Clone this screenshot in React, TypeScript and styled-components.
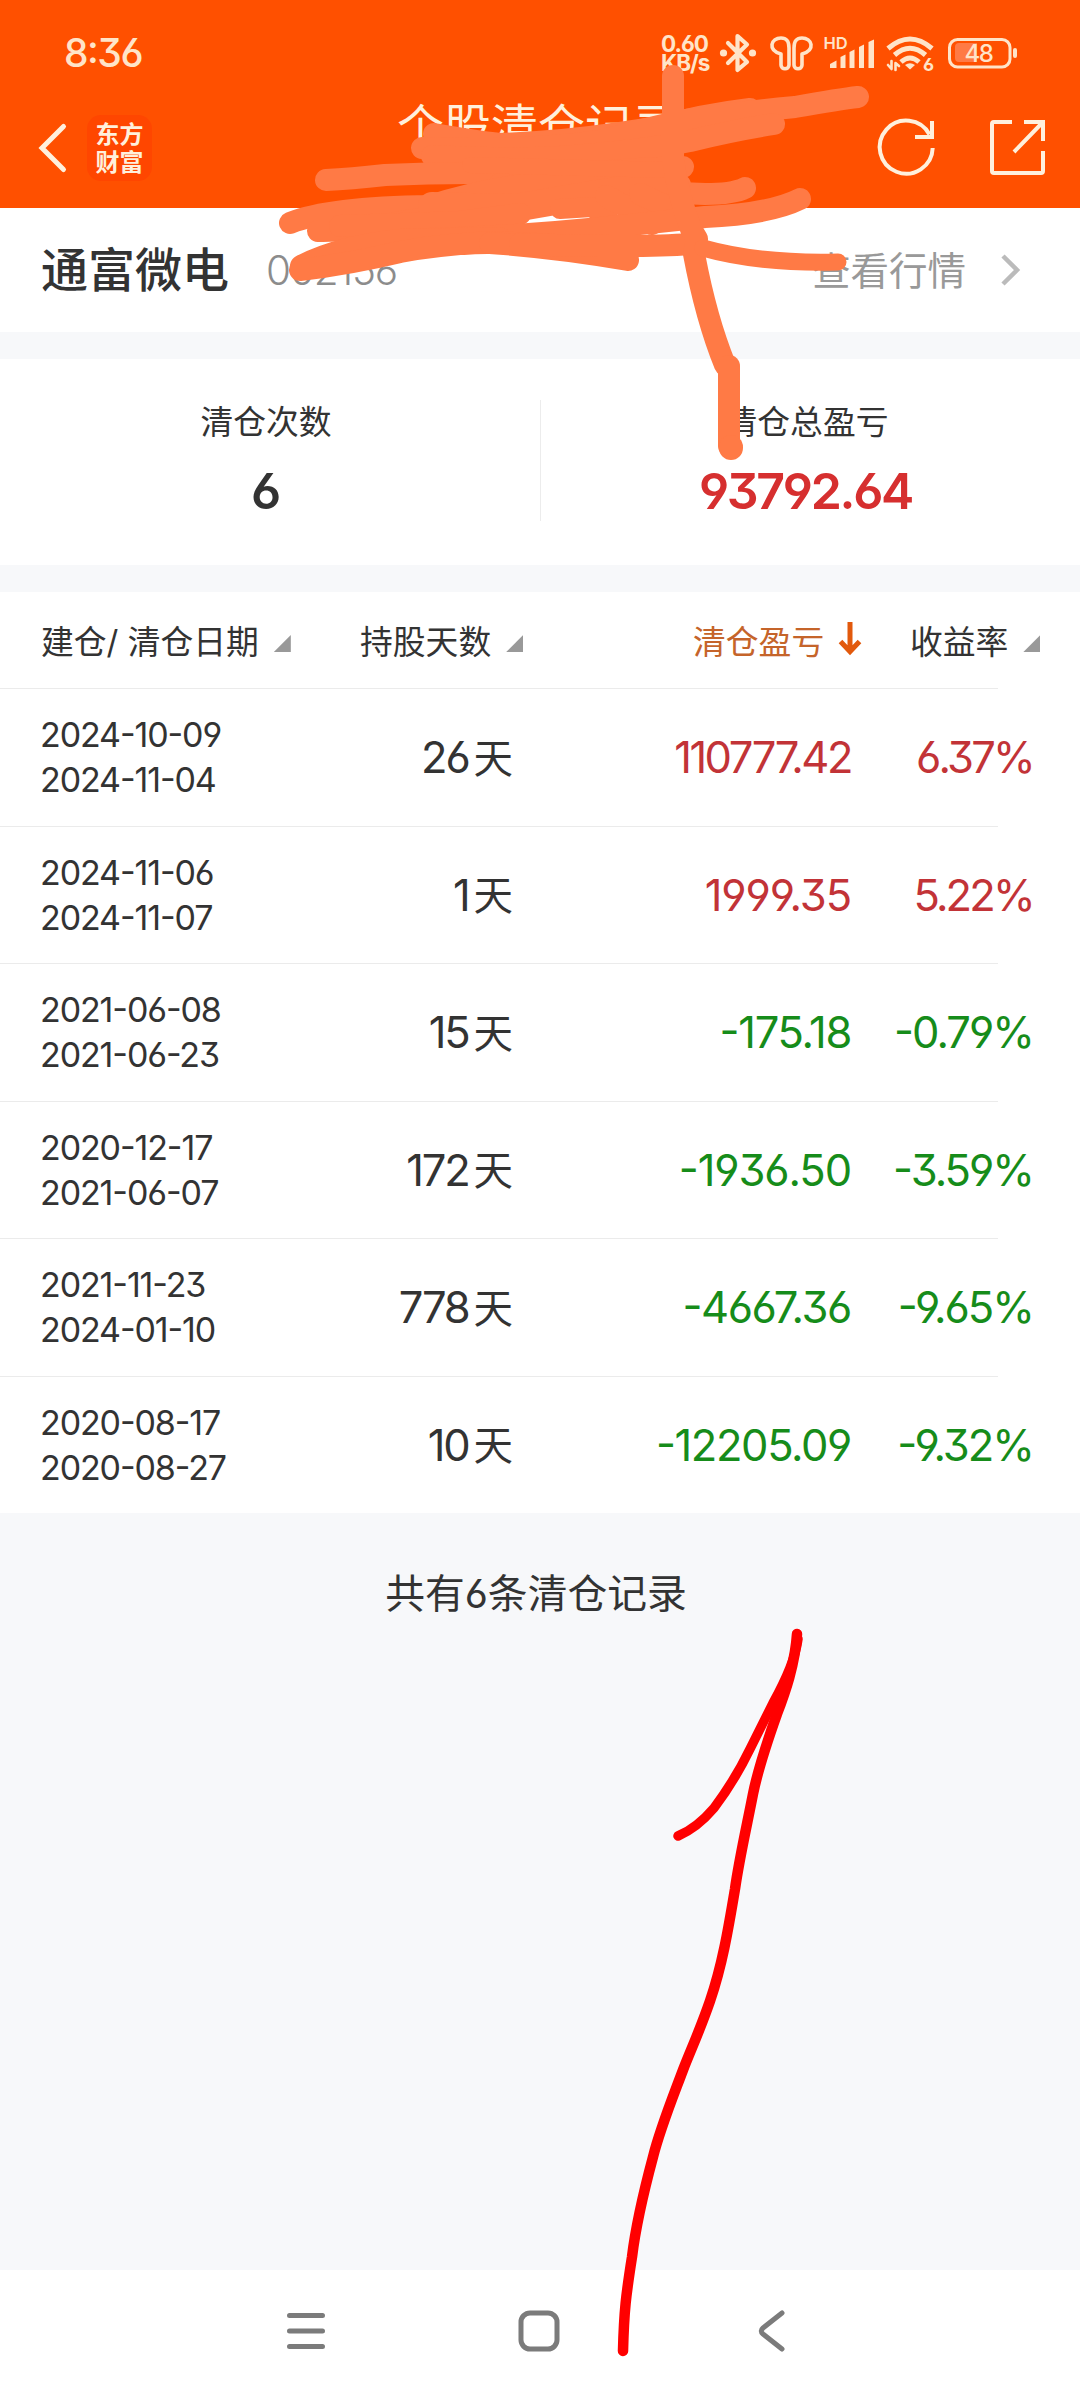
import React from "react";
import styled, { createGlobalStyle } from "styled-components";

const GlobalStyle = createGlobalStyle`
  *, *::before, *::after { box-sizing: border-box; }
  html, body { margin: 0; padding: 0; background: #f7f8fa; }
  body {
    font-family: Inter, "Noto Sans CJK SC", sans-serif;
    font-feature-settings: "cv03", "cv04", "cv09", "case";
    color: #333;
  }
`;

const CREAM = "#fff0dc";
const STATUS = "#ffe4c8";

const Screen = styled.div`
  position: relative;
  width: 1080px;
  height: 2400px;
  display: flex;
  flex-direction: column;
  overflow: hidden;
  background: #f7f8fa;
`;

const Header = styled.header`
  height: 208px;
  flex: none;
  background: #ff5000;
  display: flex;
  flex-direction: column;
`;

const StatusBar = styled.div`
  height: 88px;
  padding: 18px 60px 0 64px;
  display: flex;
  align-items: center;
  justify-content: space-between;
  color: ${STATUS};
`;

const Clock = styled.span`
  font-size: 39px;
  font-weight: 500;
  line-height: 40px;
  letter-spacing: -1.5px;
`;

const StatusIcons = styled.div`
  display: flex;
  align-items: center;
  height: 60px;
  width: 359px;
`;

const Speed = styled.div`
  width: 58px;
  display: flex;
  flex-direction: column;
  font-weight: 700;
  font-size: 22.5px;
  line-height: 19px;
  letter-spacing: -1px;
  white-space: nowrap;
`;

const TitleBar = styled.div`
  height: 120px;
  padding: 0 33px 2px 36px;
  display: grid;
  grid-template-columns: 51px 250px 1fr 110px 61px;
  align-items: center;
`;

const Logo = styled.div`
  width: 65px;
  height: 66px;
  padding-bottom: 3px;
  border-radius: 14px;
  background: #ff4600;
  color: ${CREAM};
  display: flex;
  flex-direction: column;
  align-items: center;
  justify-content: center;
  font-family: "Noto Sans CJK SC", sans-serif;
  font-weight: 700;
  font-size: 24px;
  line-height: 28px;
`;

const Title = styled.h1`
  margin: 0;
  padding-bottom: 47px;
  height: 120px;
  line-height: 75px;
  font-size: 47px;
  font-weight: 400;
  color: ${CREAM};
  white-space: nowrap;
  padding-left: 60px;
`;

const StockRow = styled.section`
  height: 124px;
  flex: none;
  background: #fff;
  padding: 0 56px 0 41px;
  display: flex;
  align-items: center;
`;

const StockName = styled.span`
  font-size: 47px;
  font-weight: 500;
  width: 225px;
  padding-bottom: 8px;
`;

const StockCode = styled.span`
  font-size: 40.5px;
  font-weight: 300;
  letter-spacing: -1.2px;
  color: #8c8c8c;
  flex: 1;
`;

const QuoteLink = styled.a`
  display: flex;
  align-items: center;
  gap: 28px;
  font-size: 38.5px;
  color: #999;
`;

const QuoteText = styled.span`
  padding-bottom: 5px;
`;

const Summary = styled.section`
  margin-top: 27px;
  height: 206px;
  padding-bottom: 3px;
  flex: none;
  background: #fff;
  display: grid;
  grid-template-columns: 532px 1px 547px;
  column-gap: 0;
  align-items: center;
`;

const Rule = styled.i`
  height: 121px;
  width: 1px;
  background: #ececec;
  justify-self: end;
  transform: translateX(8px);
`;

const Stat = styled.div`
  display: flex;
  flex-direction: column;
  align-items: center;
  padding-bottom: 4px;
`;

const StatLabel = styled.span`
  font-size: 32.8px;
  line-height: 50px;
`;

const StatValue = styled.span<{ $color?: string }>`
  margin-top: 14px;
  margin-right: 2px;
  font-size: 50px;
  line-height: 60px;
  font-weight: 600;
  letter-spacing: -2.3px;
  color: ${(p) => p.$color ?? "#333"};
`;

const Table = styled.section`
  margin-top: 27px;
  background: #fff;
  flex: none;
`;

const HeadRow = styled.div`
  height: 96px;
  display: flex;
  align-items: center;
  padding: 0 0 2px 41px;
  font-size: 32.8px;
  white-space: nowrap;
`;

const HeadCell = styled.div<{ $width: number; $active?: boolean }>`
  width: ${(p) => p.$width}px;
  flex: none;
  display: flex;
  align-items: center;
  gap: 15px;
  color: ${(p) => (p.$active ? "#c5642a" : "#333")};
`;

const SortMark = styled.i`
  width: 17px;
  height: 17px;
  margin-top: 9px;
  background: #999;
  clip-path: polygon(100% 0, 100% 100%, 0 100%);
`;

const Row = styled.div`
  height: 137px;
  display: grid;
  grid-template-columns: 40px 241px 232px 338px 182px;
  align-items: center;
  background: linear-gradient(#ebebeb, #ebebeb) 0 0 / 998px 1px no-repeat;
  &:nth-child(even) { height: 138px; }
`;

const Dates = styled.div`
  grid-column: 2;
  font-size: 34px;
  line-height: 45px;
  letter-spacing: -1.1px;
  white-space: nowrap;
`;

const Days = styled.div`
  display: flex;
  align-items: center;
  justify-content: flex-end;
  gap: 5px;
  font-size: 43.5px;
  letter-spacing: -2.2px;
`;

const Unit = styled.span`
  font-size: 39.5px;
  letter-spacing: 0;
  padding-bottom: 4px;
`;

const Figure = styled.div<{ $up: boolean; $tracking: number }>`
  text-align: right;
  font-size: 43.5px;
  letter-spacing: ${(p) => p.$tracking}px;
  white-space: nowrap;
  color: ${(p) => (p.$up ? "#c23337" : "#168c1a")};
`;

const Total = styled.p`
  margin: 0;
  flex: 1;
  padding: 53px 8px 0 0;
  text-align: center;
  font-size: 39.800px;
  line-height: 56px;
`;

const NavBar = styled.nav`
  height: 130px;
  flex: none;
  background: #fff;
  display: flex;
  justify-content: center;
  gap: 183px;
  padding: 36px 2px 0 0;
`;

const Markup = styled.svg`
  position: absolute;
  inset: 0;
  pointer-events: none;
`;

const Glyph = styled.svg`
  display: block;
  flex: none;
  overflow: visible;
`;

const GlyphText = styled.text`
  font-family: Inter, sans-serif;
  fill: ${STATUS};
`;

const records = [
  { open: "2024-10-09", close: "2024-11-04", days: 26, profit: "110777.42", rate: "6.37%", tracking: -2.5 },
  { open: "2024-11-06", close: "2024-11-07", days: 1, profit: "1999.35", rate: "5.22%", tracking: -1.1 },
  { open: "2021-06-08", close: "2021-06-23", days: 15, profit: "-175.18", rate: "-0.79%", tracking: -1.3 },
  { open: "2020-12-17", close: "2021-06-07", days: 172, profit: "-1936.50", rate: "-3.59%", tracking: -1.1 },
  { open: "2021-11-23", close: "2024-01-10", days: 778, profit: "-4667.36", rate: "-9.65%", tracking: -1.4 },
  { open: "2020-08-17", close: "2020-08-27", days: 10, profit: "-12205.09", rate: "-9.32%", tracking: -1.4 },
];

function Indicators() {
  return (
    <Glyph width="301" height="60" viewBox="719 23 301 60" fill="none" stroke={STATUS} strokeLinecap="round" strokeLinejoin="round">
      <path d="M728 43 L747 62 L737.500 70 V36 L747 44.500 L728 63" strokeWidth="4.200" />
      <g fill={STATUS} stroke="none">
        <circle cx="723.500" cy="53" r="3.600" />
        <circle cx="752.500" cy="53" r="3.600" />
      </g>
      <path d="M781 54 C767 50 771 38 781 38 C788 38 789 43 789 48 V65 C789 70 781 70 781 65Z" strokeWidth="3.600" />
      <path d="M802 54 C816 50 812 38 802 38 C795 38 794 43 794 48 V65 C794 70 802 70 802 65Z" strokeWidth="3.600" />
      <GlyphText x="823.500" y="49" fontSize="16.500" fontWeight="600" stroke="none">HD</GlyphText>
      <g fill={STATUS} stroke="none">
        <path d="M830 68 V64 L836.500 60.500 V68Z" />
        <path d="M840.500 68 V57 L845.500 54.500 V68Z" />
        <path d="M849.500 68 V52 L854.500 49.500 V68Z" />
        <path d="M859 68 V47 L864 44.500 V68Z" />
        <path d="M868.500 68 V42 L874 39.500 V68Z" />
      </g>
      <g strokeLinecap="butt" strokeWidth="5">
        <path d="M888 48.500 Q910 29.500 932 48.500" />
        <path d="M894.500 55 Q910 41.500 925.500 55" />
        <path d="M901 62 Q910 54 919 62" />
      </g>
      <path d="M905 65 Q910 61.500 915 65 L910 69.500Z" fill={STATUS} stroke="none" />
      <path d="M888 65 L891.500 69 V61 M895.500 70 V63 L899 66" strokeWidth="2.600" />
      <GlyphText x="923" y="71" fontSize="18" fontWeight="700" stroke="none">6</GlyphText>
      <rect x="949.500" y="39.500" width="60.500" height="27.500" rx="8" strokeWidth="3" />
      <path d="M959 43 H977 V62 H959 Q955 62 955 58 V47 Q955 43 959 43Z" fill="#ff7a45" stroke="none" />
      <rect x="1013" y="48" width="4" height="10" rx="2" fill={STATUS} stroke="none" />
      <GlyphText x="964.500" y="62" fontSize="24" fontWeight="500" letterSpacing="-1.500" stroke="none">48</GlyphText>
    </Glyph>
  );
}

function Annotations() {
  return (
    <Markup width="1080" height="2400" viewBox="0 0 1080 2400" fill="none" strokeLinecap="round" strokeLinejoin="round">
      <g stroke="#ff7a45" strokeWidth="22">
        <path d="M434 134 Q475 141 500 144 Q560 142 620 133 L660 127 Q700 115 750 109" />
        <path d="M858 97 Q840 99 795 107 Q720 114 680 121 Q640 130 600 141 Q520 152 422 148" />
        <path d="M774 124 Q735 130 690 141 Q640 151 560 157 Q500 160 432 156" />
        <path d="M326 180 Q350 179 385 175 Q470 171 560 175 Q640 168 683 167" />
        <path d="M745 188 Q733 194 705 194 L600 190 L500 184" />
        <path d="M290 223 Q330 207 430 206 Q510 180 620 176" />
        <path d="M318 231 Q345 232 400 222 Q520 205 680 185" />
        <path d="M432 206 L515 208 L590 195 L672 182" strokeWidth="28" />
        <path d="M340 226 L460 222 L520 214" />
        <path d="M470 165 L668 170" strokeWidth="16" />
        <path d="M560 209 L592 207 L604 216 L618 228" strokeWidth="20" />
        <path d="M606 196 L628 208 L652 224" />
        <path d="M640 194 L668 207 L690 224" />
        <path d="M800 199 Q770 214 705 217 Q650 223 600 228 Q500 238 400 240" />
        <path d="M301 266 Q340 246 400 240 L500 238" />
        <path d="M300 270 Q350 264 400 252 Q480 237 560 246 L600 250" />
        <path d="M490 243 Q560 248 628 260" />
        <path d="M520 244 Q640 248 690 244" />
        <path d="M673 76 V160 Q678 195 691 229 L697 239 L694 254 Q706 318 725 365" />
        <path d="M729 366 V446" />
        <path d="M731 447 V448" strokeWidth="24" />
        <path d="M838 262 Q760 264 703 248" strokeWidth="17" />
      </g>
      <g stroke="#ff0000" strokeWidth="10.500">
        <path d="M797 1634 C795 1665 785 1693 777 1714 C766 1745 758 1769 753 1794 C747 1825 739 1860 735 1889 C728 1931 722 1966 710 2001 C700 2030 692 2047 683 2070 C671 2102 660 2129 653 2157 C642 2198 636 2224 632 2257 C626 2295 624 2311 623 2351" />
        <path d="M678 1836 Q697 1828 714 1808 Q735 1780 750 1749 L773 1703 Q795 1663 798 1639" strokeWidth="9.500" />
      </g>
    </Markup>
  );
}

export default function App() {
  return (
    <Screen>
      <GlobalStyle />
      <Header>
        <StatusBar>
          <Clock>8:36</Clock>
          <StatusIcons>
            <Speed>
              <span>0.60</span>
              <span>KB/s</span>
            </Speed>
            <Indicators />
          </StatusIcons>
        </StatusBar>
        <TitleBar>
          <Glyph width="30" height="50" viewBox="36 123 30 50" fill="none" stroke={CREAM} strokeWidth="5" strokeLinecap="round">
            <path d="M63.500 126.500 L42 148 L63.500 169.500" />
          </Glyph>
          <Logo>
            <span>东方</span>
            <span>财富</span>
          </Logo>
          <Title>个股清仓记录</Title>
          <Glyph width="60" height="60" viewBox="876 118 60 60" fill="none" stroke={CREAM} strokeWidth="4">
            <path d="M932.700 148 A26.500 26.500 0 1 1 929.500 134.500 M932 121 V137 H915" />
          </Glyph>
          <Glyph width="61" height="60" viewBox="986 118 61 60" fill="none" stroke={CREAM} strokeWidth="4">
            <path d="M1012 122 H994 Q992 122 992 124 V171 Q992 173 994 173 H1041 Q1043 173 1043 171 V151 M1024 122 H1043 V141 M1043 122 L1014 152" />
          </Glyph>
        </TitleBar>
      </Header>

      <StockRow>
        <StockName>通富微电</StockName>
        <StockCode>002156</StockCode>
        <QuoteLink>
          <QuoteText>查看行情</QuoteText>
          <Glyph width="30" height="36" viewBox="0 0 30 36" fill="none" stroke="#bbb" strokeWidth="4.500">
            <path d="M9 4 L23 18 L9 32" />
          </Glyph>
        </QuoteLink>
      </StockRow>

      <Summary>
        <Stat>
          <StatLabel>清仓次数</StatLabel>
          <StatValue>6</StatValue>
        </Stat>
        <Rule />
        <Stat>
          <StatLabel>清仓总盈亏</StatLabel>
          <StatValue $color="#d62f2f">93792.64</StatValue>
        </Stat>
      </Summary>

      <Table>
        <HeadRow>
          <HeadCell $width={319}>建仓/ 清仓日期<SortMark /></HeadCell>
          <HeadCell $width={333}>持股天数<SortMark /></HeadCell>
          <HeadCell $width={217} $active>
            清仓盈亏
            <Glyph width="22" height="34" viewBox="0 0 22 34" fill="none" stroke="#e2590c" strokeWidth="5">
              <path d="M11 0 V30 M1.500 19.500 L11 29.500 L20.500 19.500" />
            </Glyph>
          </HeadCell>
          <HeadCell $width={140}>收益率<SortMark /></HeadCell>
        </HeadRow>
        {records.map((r) => {
          const up = !r.profit.startsWith("-");
          return (
            <Row key={r.open}>
              <Dates>
                <div>{r.open}</div>
                <div>{r.close}</div>
              </Dates>
              <Days>
                {r.days}
                <Unit>天</Unit>
              </Days>
              <Figure $up={up} $tracking={r.tracking}>{r.profit}</Figure>
              <Figure $up={up} $tracking={up ? -2.8 : -2}>{r.rate}</Figure>
            </Row>
          );
        })}
      </Table>

      <Total>共有6条清仓记录</Total>

      <NavBar>
        <Glyph width="50" height="50" viewBox="0 0 50 50" stroke="#7b7b7b" strokeWidth="5" strokeLinecap="round">
          <path d="M8.500 9.500 H41.500 M8.500 25 H41.500 M8.500 40.500 H41.500" />
        </Glyph>
        <Glyph width="50" height="50" viewBox="0 0 50 50" fill="none" stroke="#7b7b7b" strokeWidth="5">
          <rect x="7" y="7" width="36" height="36" rx="9" />
        </Glyph>
        <Glyph width="50" height="50" viewBox="0 0 50 50" fill="none" stroke="#7b7b7b" strokeWidth="5" strokeLinecap="round">
          <path d="M35 7 L16 22 Q12.500 25 16 28 L35 43" />
        </Glyph>
      </NavBar>
      <Annotations />
    </Screen>
  );
}
